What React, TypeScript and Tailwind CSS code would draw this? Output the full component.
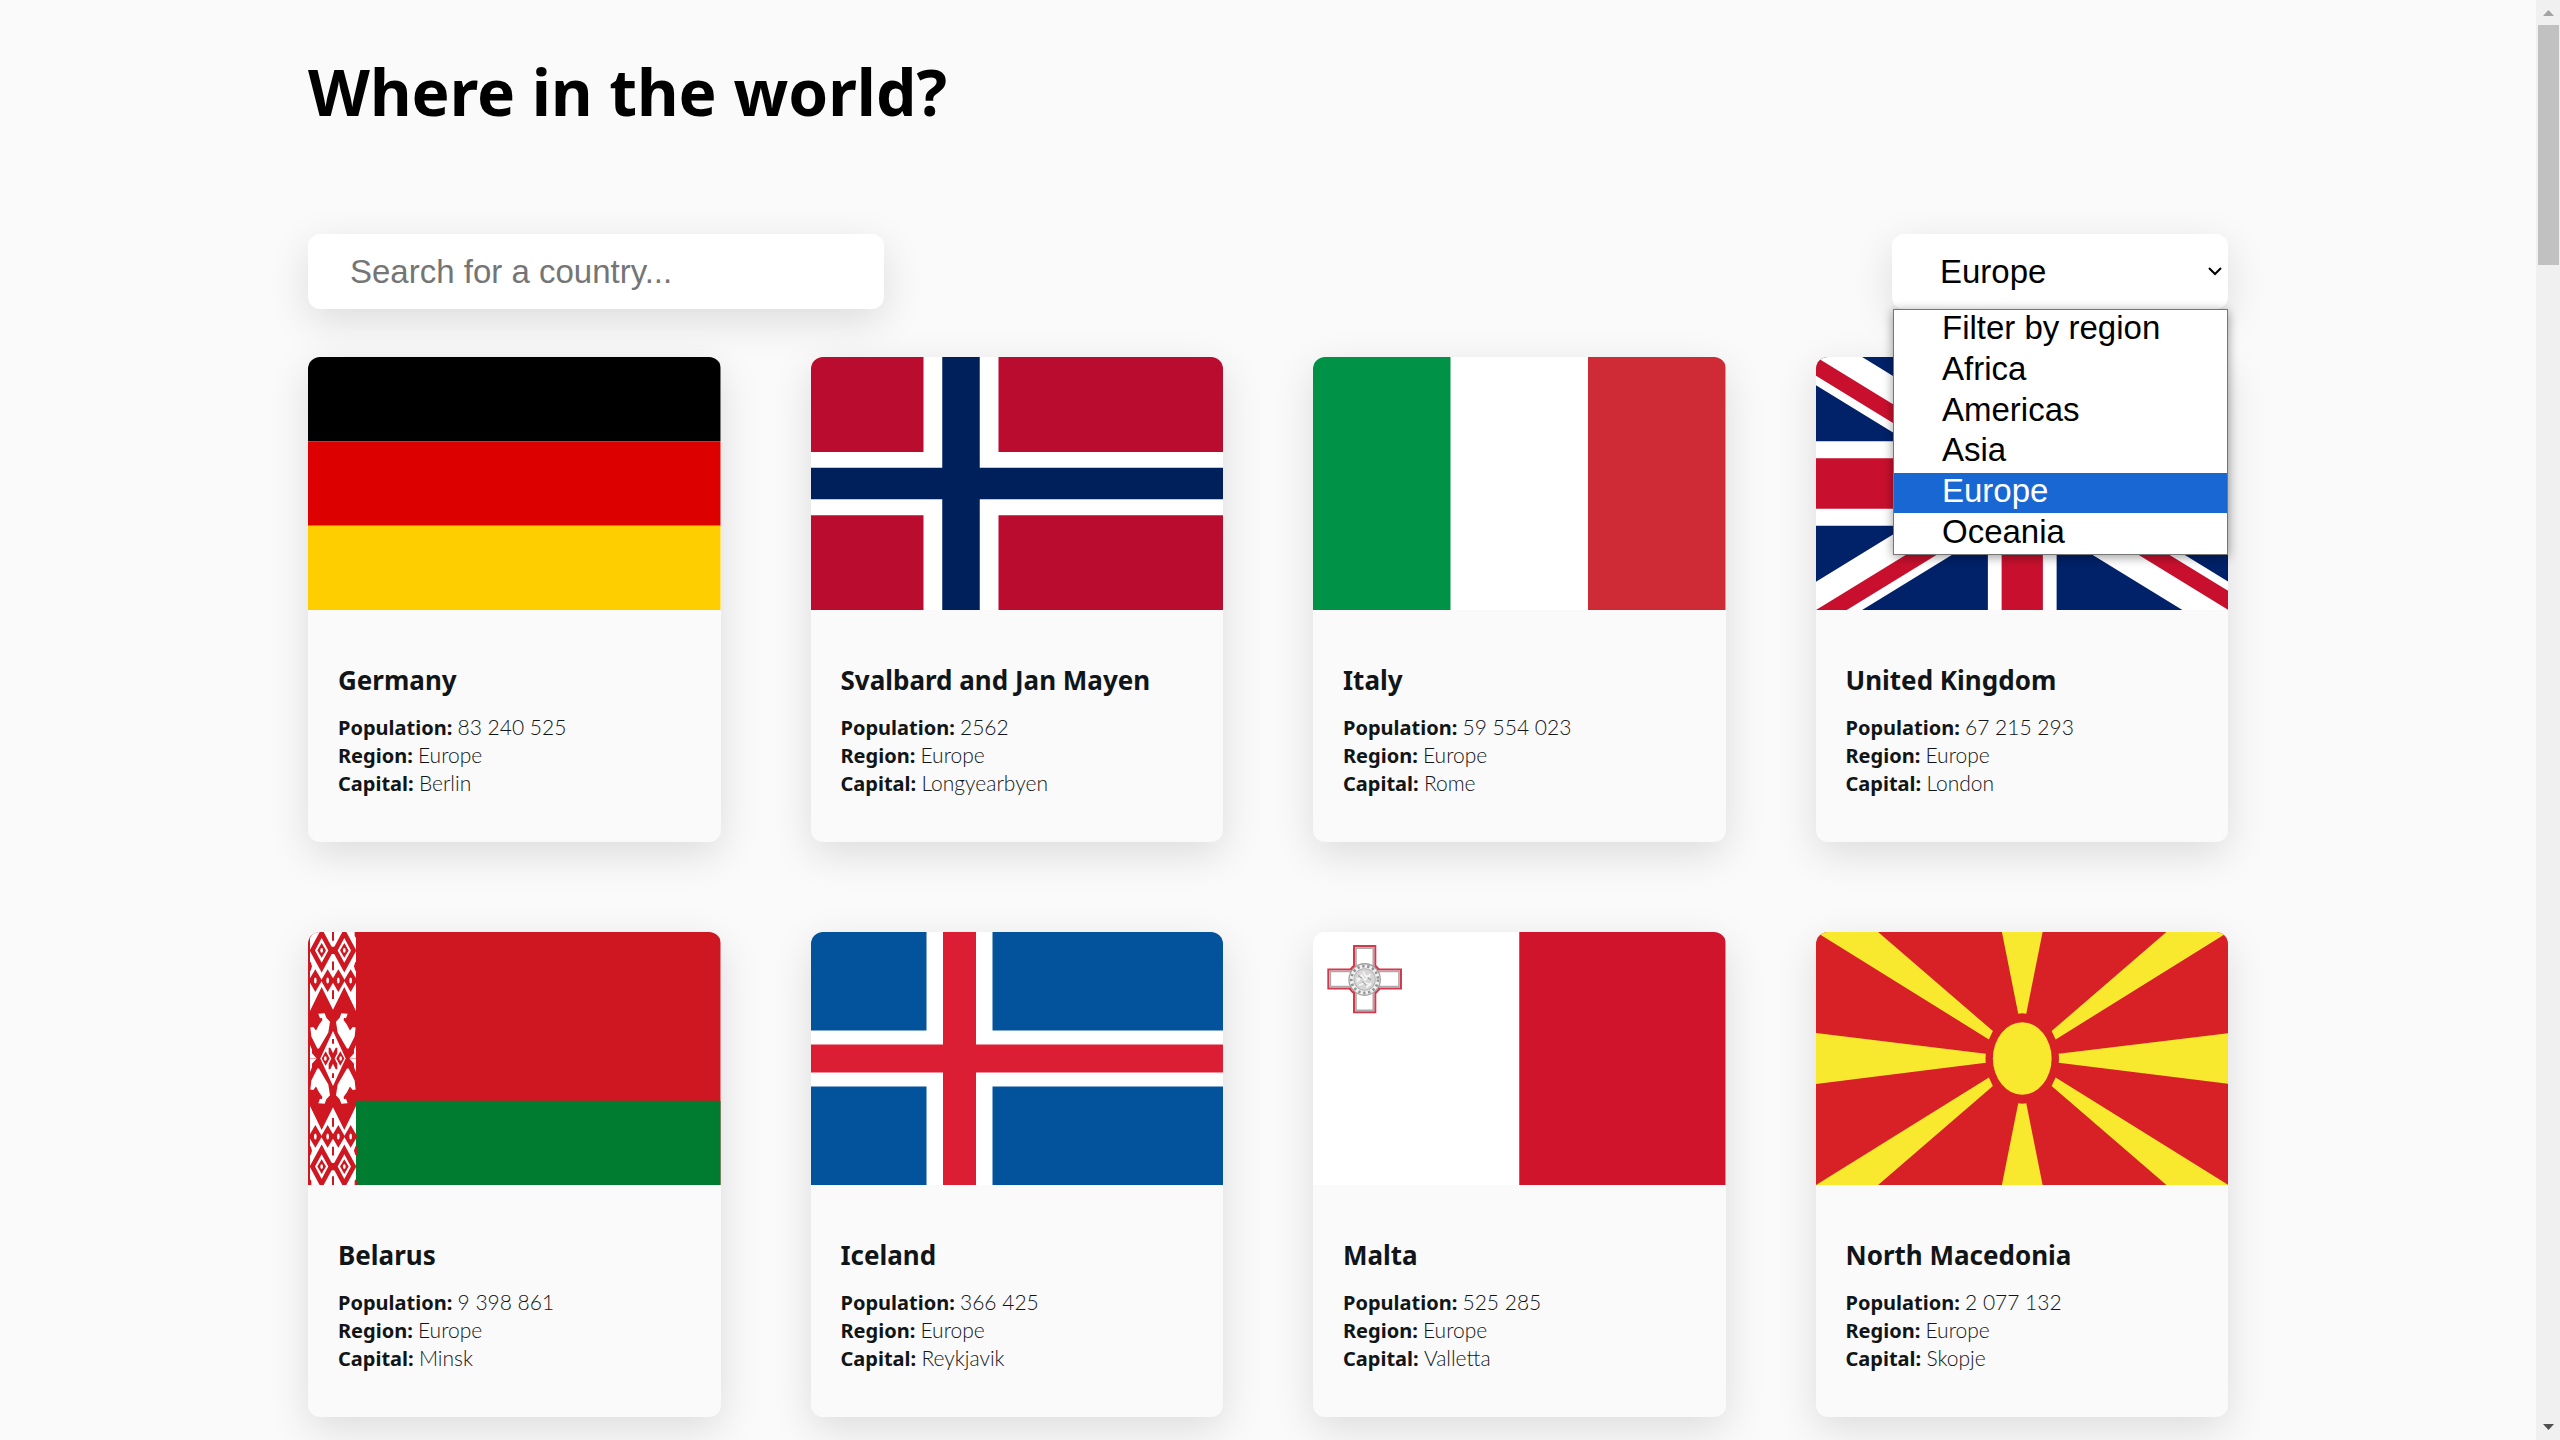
import { useState, type ReactNode } from "react";

type Country = {
  name: string;
  population: string;
  region: string;
  capital: string;
  flag: ReactNode;
};

function Flag({ viewBox, label, children }: { viewBox: string; label: string; children: ReactNode }) {
  return (
    <svg
      viewBox={viewBox}
      preserveAspectRatio="none"
      role="img"
      aria-label={label}
      className="block h-[253px] w-full rounded-t-xl"
    >
      {children}
    </svg>
  );
}

function Diamond({ x, y, w, h, fill }: { x: number; y: number; w: number; h: number; fill: string }) {
  return <path d={`M${x - w} ${y}L${x} ${y - h}L${x + w} ${y}L${x} ${y + h}Z`} fill={fill} />;
}

const RED = "#ce1720";

/* Upper half of the woven band on the hoist; the lower half mirrors it. */
function OrnamentHalf() {
  return (
    <g>
      <rect x="6" width="138" height="236" fill="#fff" />
      {[41, 109].map((x) => (
        <g key={x}>
          <Diamond x={x} y={55} w={36} h={66} fill={RED} />
          <Diamond x={x} y={55} w={20} h={37} fill="#fff" />
          <Diamond x={x} y={55} w={13} h={22} fill={RED} />
          <ellipse cx={x} cy="55" rx="4" ry="7" fill="#fff" />
        </g>
      ))}
      <path d="M0 0h10v12l-4 6M0 90h8l4 12-4 14H0M150 0h-10v12l4 6M150 90h-8l-4 12 4 14h8" fill={RED} />
      <path d="M75 0V26M75 88V114M75 174V200" stroke={RED} strokeWidth="6" />
      <path d="M68 44h14v22h-14z" fill={RED} />
      {[22, 59, 91, 128].map((x) => (
        <g key={x}>
          <Diamond x={x} y={145} w={20} h={34} fill={RED} />
          <ellipse cx={x} cy="145" rx="4" ry="9" fill="#fff" />
        </g>
      ))}
      <path d="M6 236L41 164L75 232L109 164L144 236V378H6Z" fill={RED} />
      {["", "translate(150 0) scale(-1 1)"].map((t) => (
        <g key={t} transform={t} fill="#fff">
          <path d="M31 244L50 243L55 256L66 268L61 300L33 348H28L10 312L7 285L16 284L24 294L34 276L43 264L42 256L36 258Z" />
          <path d="M6 338L12 352L12 362L26 378H6Z" />
        </g>
      ))}
    </g>
  );
}

function OrnamentCentre() {
  return (
    <g>
      <Diamond x={75} y={378} w={38} h={82} fill="#fff" />
      <path d="M75 320V334M75 422V436" stroke={RED} strokeWidth="6" />
      <path
        d="M62 346H67L75 362L83 346H88V362L80 378L88 394V410H83L75 394L67 410H62V394L70 378L62 362Z"
        fill={RED}
      />
      <Diamond x={53} y={378} w={12} h={22} fill={RED} />
      <Diamond x={97} y={378} w={12} h={22} fill={RED} />
      <ellipse cx="52" cy="378" rx="4" ry="7" fill="#fff" />
      <ellipse cx="98" cy="378" rx="4" ry="7" fill="#fff" />
    </g>
  );
}

const countries: Country[] = [
  {
    name: "Germany",
    population: "83 240 525",
    region: "Europe",
    capital: "Berlin",
    flag: (
      <Flag viewBox="0 0 5 3" label="Flag of Germany">
        <path fill="#000" d="M0 0h5v1H0z" />
        <path fill="#d00" d="M0 1h5v1H0z" />
        <path fill="#ffce00" d="M0 2h5v1H0z" />
      </Flag>
    ),
  },
  {
    name: "Svalbard and Jan Mayen",
    population: "2562",
    region: "Europe",
    capital: "Longyearbyen",
    flag: (
      <Flag viewBox="0 0 22 16" label="Flag of Svalbard and Jan Mayen">
        <path fill="#ba0c2f" d="M0 0h22v16H0z" />
        <path stroke="#fff" strokeWidth="4" d="M0 8h22M8 0v16" />
        <path stroke="#00205b" strokeWidth="2" d="M0 8h22M8 0v16" />
      </Flag>
    ),
  },
  {
    name: "Italy",
    population: "59 554 023",
    region: "Europe",
    capital: "Rome",
    flag: (
      <Flag viewBox="0 0 3 2" label="Flag of Italy">
        <path fill="#fff" d="M0 0h3v2H0z" />
        <path fill="#009246" d="M0 0h1v2H0z" />
        <path fill="#ce2b37" d="M2 0h1v2H2z" />
      </Flag>
    ),
  },
  {
    name: "United Kingdom",
    population: "67 215 293",
    region: "Europe",
    capital: "London",
    flag: (
      <Flag viewBox="0 0 60 30" label="Flag of the United Kingdom">
        <clipPath id="saltire">
          <path d="M30 15h30v15zv15H0zH0V0zV0h30z" />
        </clipPath>
        <path fill="#012169" d="M0 0h60v30H0z" />
        <path stroke="#fff" strokeWidth="6" d="M0 0l60 30m0-30L0 30" />
        <path stroke="#c8102e" strokeWidth="4" clipPath="url(#saltire)" d="M0 0l60 30m0-30L0 30" />
        <path stroke="#fff" strokeWidth="10" d="M30 0v30M0 15h60" />
        <path stroke="#c8102e" strokeWidth="6" d="M30 0v30M0 15h60" />
      </Flag>
    ),
  },
  {
    name: "Belarus",
    population: "9 398 861",
    region: "Europe",
    capital: "Minsk",
    flag: (
      <Flag viewBox="0 0 1238 756" label="Flag of Belarus">
        <path fill={RED} d="M0 0h1238v756H0z" />
        <path fill="#007c30" d="M144 504h1094v252H144z" />
        <OrnamentHalf />
        <g transform="translate(0 756) scale(1 -1)">
          <OrnamentHalf />
        </g>
        <OrnamentCentre />
      </Flag>
    ),
  },
  {
    name: "Iceland",
    population: "366 425",
    region: "Europe",
    capital: "Reykjavik",
    flag: (
      <Flag viewBox="0 0 25 18" label="Flag of Iceland">
        <path fill="#02529c" d="M0 0h25v18H0z" />
        <path stroke="#fff" strokeWidth="4" d="M0 9h25M9 0v18" />
        <path stroke="#dc1e35" strokeWidth="2" d="M0 9h25M9 0v18" />
      </Flag>
    ),
  },
  {
    name: "Malta",
    population: "525 285",
    region: "Europe",
    capital: "Valletta",
    flag: (
      <Flag viewBox="0 0 1238 756" label="Flag of Malta">
        <path fill="#fff" d="M0 0h619v756H0z" />
        <path fill="#cf142b" d="M619 0h619v756H619z" />
        <g fill="#fff" stroke="#d4384c" strokeWidth="6">
          <circle cx="155" cy="142" r="52" />
          <path d="M123 42h64v70h77v57h-77v71h-64v-71H46v-57h77z" />
          <path stroke="#aaa" strokeWidth="5" d="M129 48h52v70h77v45h-77v71h-52v-71H52v-45h77z" />
        </g>
        <circle cx="155" cy="142" r="47" fill="#f0f0f0" stroke="#a0a0a0" strokeWidth="4" />
        <circle cx="155" cy="142" r="40" fill="none" stroke="#949494" strokeWidth="8" strokeDasharray="7 8" />
        <circle cx="155" cy="142" r="32" fill="#d6d6d6" stroke="#b5b5b5" strokeWidth="3" />
        <path
          d="M132 150l14-22 10 16 16-18M138 160l16-8 20 6M150 118l8 14 14 0M130 138l12 6M160 166l14-14"
          fill="none"
          stroke="#f5f5f5"
          strokeWidth="5"
        />
        <path d="M136 130l10 8M148 148l12 10M164 136l10 8" stroke="#9a9a9a" strokeWidth="3" />
      </Flag>
    ),
  },
  {
    name: "North Macedonia",
    population: "2 077 132",
    region: "Europe",
    capital: "Skopje",
    flag: (
      <Flag viewBox="0 0 1236 756" label="Flag of North Macedonia">
        <path fill="#d82126" d="M0 0h1236v756H0z" />
        <g fill="#f8e92e">
          <path d="M557 0H679L630 244Q618 242 606 244ZM557 756H679L630 512Q618 514 606 512Z" />
          <path d="M0 302V454L509 391Q507 378 509 364ZM1236 302V454L727 391Q729 378 727 364Z" />
          <path d="M0 0H186L530 296L518 321ZM1236 0H1050L706 296L718 321Z" />
          <path d="M0 756H186L530 460L518 435ZM1236 756H1050L706 460L718 435Z" />
          <ellipse cx="618" cy="378" rx="88" ry="108" />
        </g>
      </Flag>
    ),
  },
];

const regions = ["Filter by region", "Africa", "Americas", "Asia", "Europe", "Oceania"];

function Detail({ term, value }: { term: string; value: string }) {
  return (
    <div>
      <dt className="inline font-bold">{term}:</dt>{" "}
      <dd className="inline font-[Lato,sans-serif] text-[21px] leading-none font-light">{value}</dd>
    </div>
  );
}

function CountryCard({ country }: { country: Country }) {
  return (
    <article className="rounded-xl bg-[#fafafa] shadow-[0_12px_40px_rgba(0,0,0,0.12)]">
      {country.flag}
      <div className="px-[30px] pt-[54px] pb-[44px] text-[#111517]">
        <h2 className="mb-[18px] text-[26px] leading-8 font-bold">{country.name}</h2>
        <dl className="text-[20px] leading-7">
          <Detail term="Population" value={country.population} />
          <Detail term="Region" value={country.region} />
          <Detail term="Capital" value={country.capital} />
        </dl>
      </div>
    </article>
  );
}

function RegionFilter({ region, onChange }: { region: string; onChange: (r: string) => void }) {
  return (
    <div className="relative w-[336px] font-['Liberation_Sans',sans-serif] text-[33px] text-black">
      <select
        aria-label="Filter by region"
        value={region}
        onChange={(e) => onChange(e.target.value)}
        className="h-[75px] w-full appearance-none rounded-xl bg-white pr-10 pl-12 shadow-[0_12px_40px_rgba(0,0,0,0.12)] outline-none"
      >
        {regions.map((r) => (
          <option key={r}>{r}</option>
        ))}
      </select>
      <svg
        viewBox="0 0 14 9"
        aria-hidden="true"
        className="pointer-events-none absolute top-[33px] right-1.5 h-[9px] w-3.5"
      >
        <path d="M1 1l6 6 6-6" fill="none" stroke="#000" strokeWidth="2" />
      </svg>
      <ul
        role="listbox"
        aria-label="Regions"
        className="absolute top-full right-0 left-px z-10 grid h-[246px] grid-rows-6 border border-[#767676] bg-white shadow-[0_2px_10px_rgba(0,0,0,0.4)]"
      >
        {regions.map((r) => (
          <li key={r} role="option" aria-selected={r === region} className="flex">
            <button
              type="button"
              onClick={() => onChange(r)}
              className={
                r === region
                  ? "w-full bg-[#1967d2] pb-1 pl-12 text-left leading-9 text-white"
                  : "w-full pb-1 pl-12 text-left leading-9"
              }
            >
              {r}
            </button>
          </li>
        ))}
      </ul>
    </div>
  );
}

function Scrollbar() {
  return (
    <div aria-hidden="true" className="flex w-6 shrink-0 flex-col items-center bg-[#f0f0f0] pl-px">
      <svg viewBox="0 0 11 6" className="mt-2.5 mb-[9px] h-1.5 w-[11px] shrink-0">
        <path d="M5.500 0L11 6H0z" fill="#a3a3a3" />
      </svg>
      <div className="h-60 w-[21px] shrink-0 bg-[#c1c1c1]" />
      <svg viewBox="0 0 11 6" className="mt-auto mb-2.5 h-1.5 w-[11px] shrink-0">
        <path d="M0 0h11L5.500 6z" fill="#505050" />
      </svg>
    </div>
  );
}

export default function App() {
  const [region, setRegion] = useState("Europe");
  const [query, setQuery] = useState("");
  const shown = countries.filter((c) => c.name.toLowerCase().includes(query.toLowerCase()));

  return (
    <div className="flex h-screen overflow-hidden bg-[#fafafa] font-['Noto_Sans',sans-serif]">
      <div className="min-w-0 flex-1 overflow-hidden">
        <div className="mx-auto max-w-[1920px] pt-12">
          <h1 className="mb-[98px] text-[64px] leading-[88px] font-bold text-black">Where in the world?</h1>
          <div className="mb-12 flex items-start justify-between">
            <input
              type="text"
              aria-label="Search for a country"
              placeholder="Search for a country..."
              value={query}
              onChange={(e) => setQuery(e.target.value)}
              className="h-[75px] w-[30%] rounded-xl bg-white px-[42px] font-['Liberation_Sans',sans-serif] text-[33px] text-black shadow-[0_12px_40px_rgba(0,0,0,0.12)] outline-none placeholder:text-[#757575]"
            />
            <RegionFilter region={region} onChange={setRegion} />
          </div>
          <main className="grid grid-cols-4 gap-[90px]">
            {shown.map((c) => (
              <CountryCard key={c.name} country={c} />
            ))}
          </main>
        </div>
      </div>
      <Scrollbar />
    </div>
  );
}
